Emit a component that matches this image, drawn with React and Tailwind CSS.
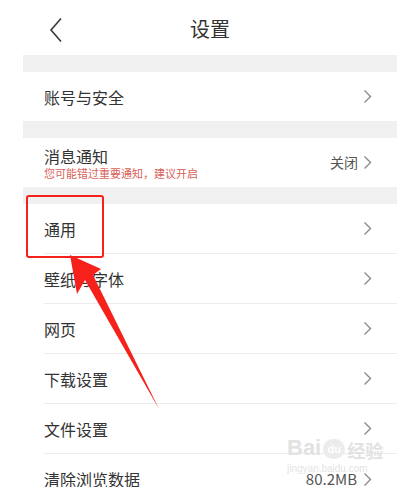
import { Fragment } from "react";

const font = { fontFamily: '"Noto Sans CJK SC", "Noto Sans", sans-serif' };

function Chevron() {
  return (
    <svg width="9" height="15" viewBox="0 0 9 15" className="shrink-0">
      <path d="M1.5 1.5 L7.5 7.5 L1.5 13.5" fill="none" stroke="#8a8a8a" strokeWidth="1.4" />
    </svg>
  );
}

function Band({ h = "h-[17px]" }) {
  return <div className={`${h} bg-[#f0f0f0]`} />;
}

const rows = [
  { label: "通用" },
  { label: "壁纸与字体" },
  { label: "网页" },
  { label: "下载设置" },
  { label: "文件设置" },
  { label: "清除浏览数据", value: "80.2MB", last: true },
];

export default function App() {
  return (
    <div className="relative w-[404px] h-[487px] overflow-hidden bg-white text-[#333]" style={font}>
      {/* header */}
      <div className="h-[55px] flex items-center relative">
        <svg width="14" height="26" viewBox="0 0 14 26" className="absolute left-[49px] top-[17px]">
          <path d="M12 1.5 L2 13 L12 24.5" fill="none" stroke="#3a3a3a" strokeWidth="1.6" />
        </svg>
        <div className="w-full text-center text-[20px] leading-none pl-[16px] pt-[2px]">设置</div>
      </div>

      <div className="ml-[23px] mr-[7px]">
        <Band />
        <div className="h-[49px] flex items-center justify-between pl-[21px] pr-[25px]">
          <span className="text-[16px]">账号与安全</span>
          <Chevron />
        </div>
        <Band />
        <div className="h-[49px] flex items-center justify-between pl-[21px] pr-[25px]">
          <div className="flex flex-col">
            <span className="text-[16px] leading-[20px]">消息通知</span>
            <span className="text-[11px] leading-[14px] text-[#d8625a]">您可能错过重要通知，建议开启</span>
          </div>
          <div className="flex items-center gap-[5px]">
            <span className="text-[14px] text-[#555]">关闭</span>
            <Chevron />
          </div>
        </div>
        <Band />
        {rows.map((r) => (
          <Fragment key={r.label}>
            <div className={`ml-[21px] h-[50px] flex items-center justify-between pr-[25px] ${r.last ? "" : "border-b border-[#ececec]"}`}>
              <span className="text-[16px]">{r.label}</span>
              <div className="flex items-center gap-[6px]">
                {r.value && <span className="text-[15px] text-[#555]">{r.value}</span>}
                <Chevron />
              </div>
            </div>
          </Fragment>
        ))}
      </div>

      {/* watermark */}
      <div className="absolute left-[287px] top-[437px] flex items-end gap-[2px] text-[#e2e2e2] pointer-events-none">
        <span className="text-[22px] font-bold leading-none" style={{ fontFamily: '"Liberation Sans", sans-serif' }}>Bai</span>
        <span className="w-[22px] h-[20px] rounded-full bg-[#ececec] text-white text-[11px] font-bold flex items-center justify-center" style={{ fontFamily: '"Liberation Sans", sans-serif' }}>du</span>
        <span className="text-[18px] font-bold leading-none">经验</span>
      </div>
      <div className="absolute left-[287px] top-[461px] text-[10px] text-[#e4e4e4] pointer-events-none" style={{ fontFamily: '"Liberation Sans", sans-serif' }}>
        jingyan.baidu.com
      </div>

      {/* annotation */}
      <div className="absolute left-[26px] top-[195px] w-[78px] h-[63px] border-[2.5px] border-[#f5211a] rounded-[3px] pointer-events-none" />
      <svg className="absolute left-0 top-0 pointer-events-none" width="404" height="487">
        <polygon points="70,255 101,269 93,275 159,409 85,280 77,294" fill="#f5211a" />
      </svg>
    </div>
  );
}
